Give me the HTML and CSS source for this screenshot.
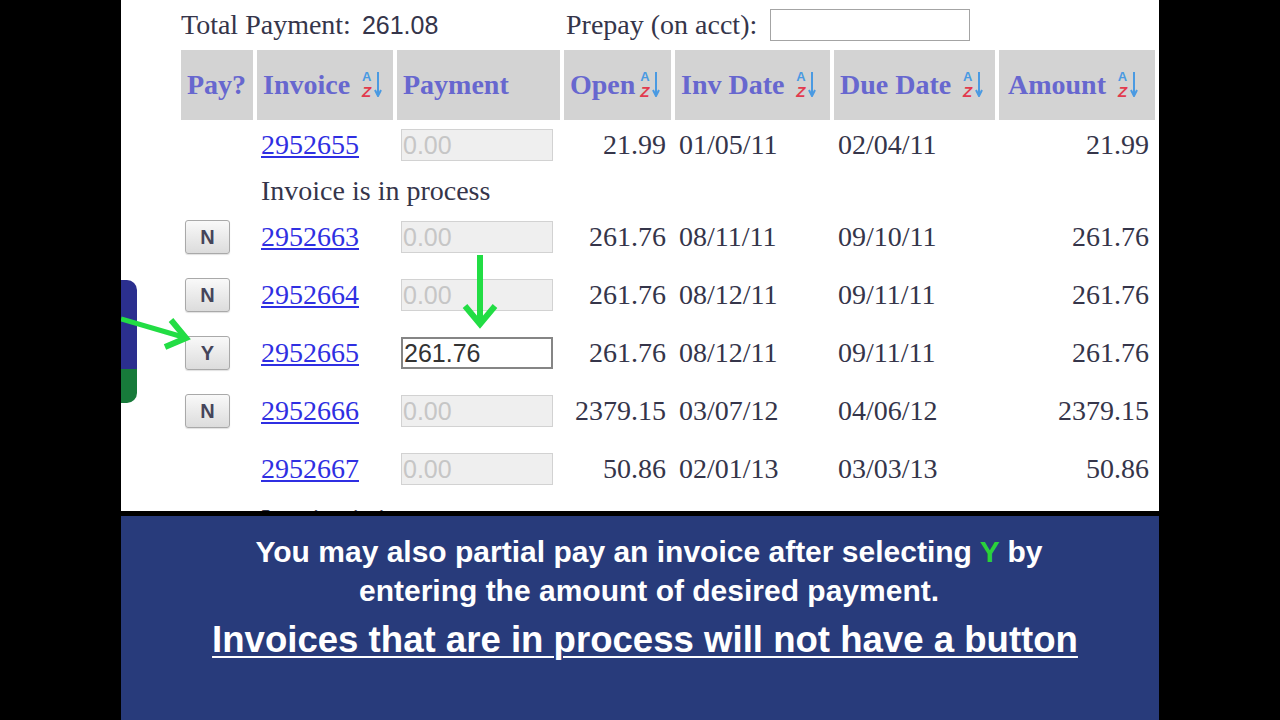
FILE: index.html
```html
<!DOCTYPE html>
<html>
<head>
<meta charset="utf-8">
<title>Invoices</title>
<link rel="stylesheet" href="styles.css">
</head>
<body>
<div class="frame">
  <div class="page">
    <div class="summary">
      <div class="total">Total Payment: <span class="num">261.08</span></div>
      <div class="prepay">Prepay (on acct):<input class="prepay-input" type="text"></div>
    </div>

    <div class="row head">
      <div class="th">Pay?</div>
      <div class="th">Invoice&nbsp;<span class="sort"><span class="sort-az"><span class="sort-a">A</span><span class="sort-z">Z</span></span><svg class="sort-arrow" width="8" height="28" viewBox="0 0 8 28"><path d="M4 3V26M1 21L4 27L7 21" stroke="#4a9ae2" stroke-width="2" fill="none"/></svg></span></div>
      <div class="th">Payment</div>
      <div class="th">Open<span class="sort"><span class="sort-az"><span class="sort-a">A</span><span class="sort-z">Z</span></span><svg class="sort-arrow" width="8" height="28" viewBox="0 0 8 28"><path d="M4 3V26M1 21L4 27L7 21" stroke="#4a9ae2" stroke-width="2" fill="none"/></svg></span></div>
      <div class="th">Inv Date&nbsp;<span class="sort"><span class="sort-az"><span class="sort-a">A</span><span class="sort-z">Z</span></span><svg class="sort-arrow" width="8" height="28" viewBox="0 0 8 28"><path d="M4 3V26M1 21L4 27L7 21" stroke="#4a9ae2" stroke-width="2" fill="none"/></svg></span></div>
      <div class="th">Due Date&nbsp;<span class="sort"><span class="sort-az"><span class="sort-a">A</span><span class="sort-z">Z</span></span><svg class="sort-arrow" width="8" height="28" viewBox="0 0 8 28"><path d="M4 3V26M1 21L4 27L7 21" stroke="#4a9ae2" stroke-width="2" fill="none"/></svg></span></div>
      <div class="th th-amount">Amount&nbsp;<span class="sort"><span class="sort-az"><span class="sort-a">A</span><span class="sort-z">Z</span></span><svg class="sort-arrow" width="8" height="28" viewBox="0 0 8 28"><path d="M4 3V26M1 21L4 27L7 21" stroke="#4a9ae2" stroke-width="2" fill="none"/></svg></span></div>
    </div>

    <div class="row data first">
      <div class="pay"></div>
      <div class="inv"><a class="link" href="#">2952655</a></div>
      <div class="payment"><input class="field" type="text" value="0.00" disabled></div>
      <div class="open">21.99</div>
      <div class="date">01/05/11</div>
      <div class="date">02/04/11</div>
      <div class="amount">21.99</div>
    </div>
    <div class="row note"><div class="note-text">Invoice is in process</div></div>

    <div class="row data">
      <div class="pay"><button class="btn" type="button">N</button></div>
      <div class="inv"><a class="link" href="#">2952663</a></div>
      <div class="payment"><input class="field" type="text" value="0.00" disabled></div>
      <div class="open">261.76</div>
      <div class="date">08/11/11</div>
      <div class="date">09/10/11</div>
      <div class="amount">261.76</div>
    </div>
    <div class="row data">
      <div class="pay"><button class="btn" type="button">N</button></div>
      <div class="inv"><a class="link" href="#">2952664</a></div>
      <div class="payment"><input class="field" type="text" value="0.00" disabled></div>
      <div class="open">261.76</div>
      <div class="date">08/12/11</div>
      <div class="date">09/11/11</div>
      <div class="amount">261.76</div>
    </div>
    <div class="row data">
      <div class="pay"><button class="btn" type="button">Y</button></div>
      <div class="inv"><a class="link" href="#">2952665</a></div>
      <div class="payment"><input class="field active" type="text" value="261.76"></div>
      <div class="open">261.76</div>
      <div class="date">08/12/11</div>
      <div class="date">09/11/11</div>
      <div class="amount">261.76</div>
    </div>
    <div class="row data">
      <div class="pay"><button class="btn" type="button">N</button></div>
      <div class="inv"><a class="link" href="#">2952666</a></div>
      <div class="payment"><input class="field" type="text" value="0.00" disabled></div>
      <div class="open">2379.15</div>
      <div class="date">03/07/12</div>
      <div class="date">04/06/12</div>
      <div class="amount">2379.15</div>
    </div>
    <div class="row data">
      <div class="pay"></div>
      <div class="inv"><a class="link" href="#">2952667</a></div>
      <div class="payment"><input class="field" type="text" value="0.00" disabled></div>
      <div class="open">50.86</div>
      <div class="date">02/01/13</div>
      <div class="date">03/03/13</div>
      <div class="amount">50.86</div>
    </div>
    <div class="row note"><div class="note-text">Invoice is in process</div></div>
  </div>

  <div class="caption">
    <div class="cap-line">You may also partial pay an invoice after selecting <span class="green">Y</span> by</div>
    <div class="cap-line">entering the amount of desired payment.</div>
    <div class="cap-big">Invoices that are in process will not have a button</div>
  </div>

  <div class="tab"></div>
  <svg class="arrows" width="1038" height="720" viewBox="0 0 1038 720">
    <path d="M0 319L62 337" stroke="#22dd44" stroke-width="5" fill="none"/>
    <path d="M50 320L65 338L44 347" stroke="#22dd44" stroke-width="6" fill="none"/>
    <path d="M359 255V322" stroke="#22dd44" stroke-width="6" fill="none"/>
    <path d="M344 306L359 324L374 306" stroke="#22dd44" stroke-width="6" fill="none"/>
  </svg>
</div>
</body>
</html>
```

FILE: styles.css
```css
html, body {
  margin: 0;
  padding: 0;
}
body {
  background: #000;
  width: 1280px;
  height: 720px;
  overflow: hidden;
}
.frame {
  position: relative;
  width: 1038px;
  height: 720px;
  margin-left: 121px;
}
.page {
  background: #fff;
  height: 511px;
  overflow: hidden;
  padding-left: 60px;
  font-family: "Liberation Serif", "Times New Roman", serif;
  color: #35354a;
}
.summary {
  display: flex;
  align-items: center;
  height: 50px;
  font-size: 28px;
}
.total {
  width: 385px;
  white-space: nowrap;
}
.num {
  font-family: "Liberation Sans", Arial, sans-serif;
  font-size: 25px;
  margin-left: 4px;
}
.prepay {
  display: flex;
  align-items: center;
  white-space: nowrap;
}
.prepay-input {
  margin-left: 13px;
  width: 200px;
  height: 32px;
  box-sizing: border-box;
  border: 1px solid #a4a4a4;
  background: #fff;
  padding: 0;
}
.row {
  display: grid;
  grid-template-columns: 72px 136px 163px 107px 155px 161px 156px;
  column-gap: 4px;
  align-items: center;
  font-size: 28px;
  white-space: nowrap;
}
.head {
  height: 70px;
}
.th {
  height: 100%;
  background: #d3d3d3;
  display: flex;
  align-items: center;
  padding-left: 6px;
  font-weight: bold;
  color: #6767cf;
}
.th-amount {
  padding-left: 9px;
}
.sort {
  display: inline-flex;
  align-items: flex-start;
  height: 30px;
  margin-left: 3px;
  margin-top: -2px;
}
.sort-az {
  display: flex;
  flex-direction: column;
  font-family: "Liberation Sans", Arial, sans-serif;
  font-weight: bold;
  width: 13px;
  text-align: center;
}
.sort-a {
  color: #4a9ae2;
  font-size: 13px;
  line-height: 15px;
}
.sort-z {
  color: #e23a4e;
  font-style: italic;
  font-size: 15px;
  line-height: 15px;
}
.sort-arrow {
  display: block;
  margin-left: 1px;
}
.data {
  height: 58px;
}
.data.first {
  height: 50px;
}
.note {
  height: 38px;
}
.note-text {
  grid-column: 2 / -1;
  padding-left: 4px;
  padding-top: 4px;
}
.pay, .inv, .payment, .date {
  padding-left: 4px;
}
.open {
  text-align: right;
  padding-right: 5px;
}
.amount {
  text-align: right;
  padding-right: 6px;
}
.link {
  color: #2f2fe2;
  text-decoration: underline;
}
.btn {
  display: flex;
  align-items: center;
  justify-content: center;
  width: 45px;
  height: 34px;
  box-sizing: border-box;
  padding: 0;
  border: 1px solid #a9a9a9;
  border-radius: 3px;
  background: linear-gradient(#f9f9f9, #dcdcdc);
  box-shadow: 0 1px 1px rgba(0, 0, 0, 0.12);
  font-family: "Liberation Sans", Arial, sans-serif;
  font-weight: bold;
  font-size: 20px;
  color: #45455a;
}
.field {
  display: block;
  width: 152px;
  height: 32px;
  box-sizing: border-box;
  border: 1px solid #d2d2d2;
  background: #efefef;
  padding: 0 1px;
  font-family: "Liberation Sans", Arial, sans-serif;
  font-size: 25px;
  color: #c6c6c6;
  -webkit-text-fill-color: #c6c6c6;
  opacity: 1;
}
.field.active {
  background: #fff;
  border: 2px solid #858585;
  color: #333;
  -webkit-text-fill-color: #333;
}
.caption {
  margin-top: 5px;
  height: 204px;
  box-sizing: border-box;
  padding-top: 16px;
  background: #283b7b;
  color: #fff;
  font-family: "Liberation Sans", Arial, sans-serif;
  font-weight: bold;
  text-align: center;
  white-space: nowrap;
}
.cap-line {
  font-size: 30px;
  line-height: 39px;
  padding-left: 18px;
}
.cap-big {
  margin-top: 8px;
  padding-left: 10px;
  font-size: 36.6px;
  line-height: 44px;
  text-decoration: underline;
  text-decoration-thickness: 2px;
  text-underline-offset: 4px;
}
.green {
  color: #2ad13a;
}
.tab {
  position: absolute;
  left: 0;
  top: 280px;
  width: 16px;
  height: 123px;
  border-radius: 0 10px 10px 0;
  background: linear-gradient(#2b2f8e 0, #2b2f8e 72%, #177a3a 72%, #177a3a 100%);
}
.arrows {
  position: absolute;
  left: 0;
  top: 0;
  pointer-events: none;
}
```
